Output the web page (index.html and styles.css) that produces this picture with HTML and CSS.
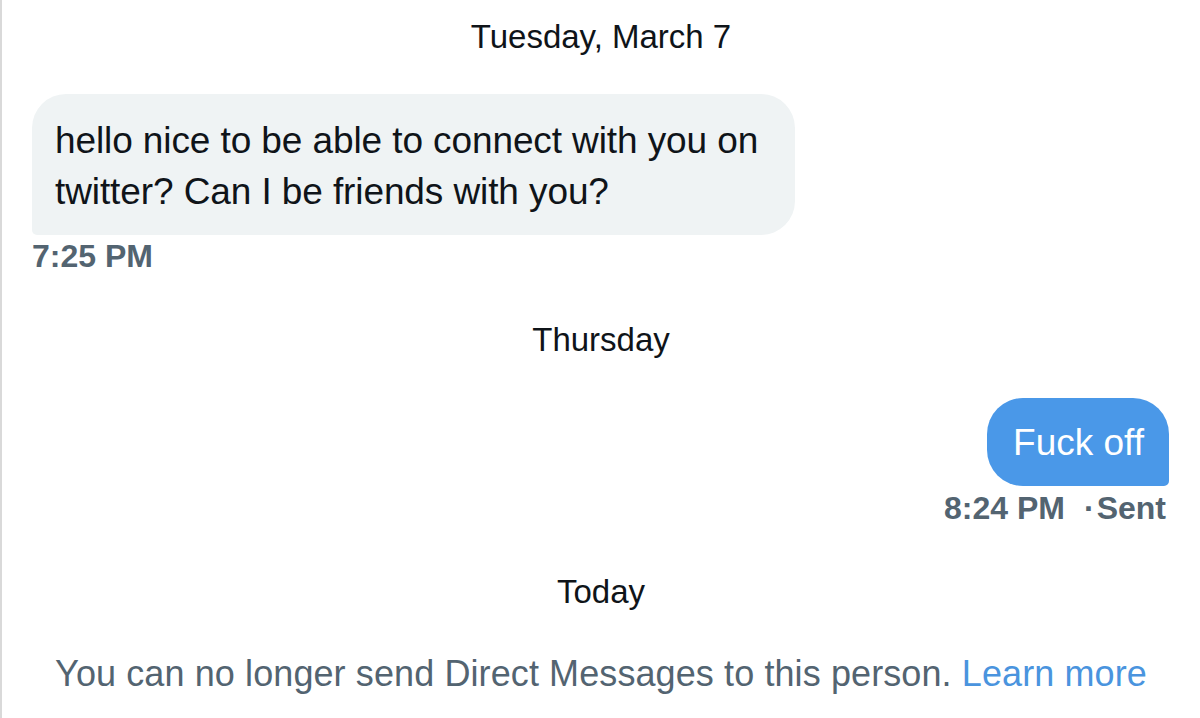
FILE: index.html
```html
<!DOCTYPE html>
<html lang="en">
<head>
<meta charset="utf-8">
<title>Direct Messages</title>
<link rel="stylesheet" href="styles.css">
</head>
<body>
<main class="thread">
  <div class="day day-first">Tuesday, March 7</div>
  <div class="msg msg-in">
    <div class="bubble bubble-in">hello nice to be able to connect with you on twitter? Can I be friends with you?</div>
    <div class="meta">7:25 PM</div>
  </div>
  <div class="day">Thursday</div>
  <div class="msg msg-out">
    <div class="bubble bubble-out">Fuck off</div>
    <div class="meta">8:24 PM<span class="dot">·</span>Sent</div>
  </div>
  <div class="day">Today</div>
  <p class="notice">You can no longer send Direct Messages to this person. <a class="learn" href="#">Learn more</a></p>
</main>
</body>
</html>
```

FILE: styles.css
```css
html, body {
  margin: 0;
  padding: 0;
  background: #ffffff;
}

body {
  font-family: "Liberation Sans", Arial, sans-serif;
  color: #0f1419;
}

.thread {
  box-sizing: border-box;
  width: 1200px;
  height: 718px;
  border-left: 2px solid #d9d9d9;
  padding: 17px 31px 0 30px;
  display: flex;
  flex-direction: column;
  overflow: hidden;
}

.day {
  text-align: center;
  font-size: 33px;
  line-height: 40px;
  margin-top: 48px;
  margin-left: -30px;
  margin-right: -31px;
  color: #0f1419;
}

.day-first {
  margin-top: 0;
}

.msg {
  display: flex;
  flex-direction: column;
}

.msg-in {
  align-items: flex-start;
  margin-top: 37px;
}

.msg-out {
  align-items: flex-end;
  margin-top: 38px;
}

.bubble {
  font-size: 37px;
  line-height: 51px;
}

.bubble-in {
  max-width: 720px;
  background: #eff3f4;
  color: #0f1419;
  letter-spacing: -0.1px;
  padding: 21px 20px 18px 23px;
  border-radius: 34px 34px 34px 5px;
}

.bubble-out {
  background: #4a98e8;
  color: #ffffff;
  padding: 19px 25px 18px 26px;
  border-radius: 36px 36px 5px 36px;
}

.meta {
  font-family: "Liberation Sans", Arial, sans-serif;
  font-weight: 700;
  font-size: 32px;
  line-height: 32px;
  color: #536471;
  margin-top: 5px;
}

.msg-out .meta {
  margin-top: 6px;
  margin-right: 3px;
}

.dot {
  margin-left: 19px;
  margin-right: 2px;
}

.notice {
  margin: 40px -31px 0 -30px;
  text-align: center;
  font-size: 36px;
  line-height: 44px;
  letter-spacing: 0.1px;
  color: #536471;
}

.learn {
  color: #4a94de;
  text-decoration: none;
}
```
